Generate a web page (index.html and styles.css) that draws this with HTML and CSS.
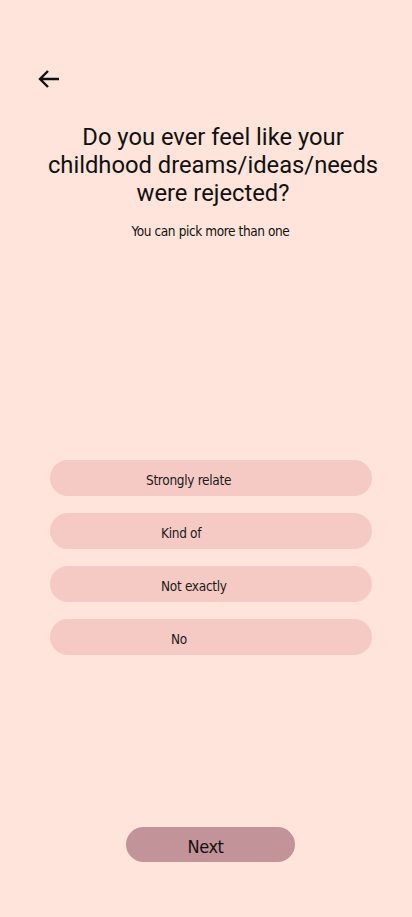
FILE: index.html
```html
<!DOCTYPE html>
<html>
<head>
<meta charset="utf-8">
<link rel="stylesheet" href="styles.css">
</head>
<body>
<div class="screen">
  <div class="topbar">
    <button class="back" aria-label="Back">
      <svg width="22" height="20" viewBox="0 0 22 20"><path d="M21 10H2.5M10 2L2 10l8 8" fill="none" stroke="#111" stroke-width="2.4" stroke-linejoin="miter"/></svg>
    </button>
  </div>
  <h1 class="title">Do you ever feel like your childhood dreams/ideas/needs were rejected?</h1>
  <p class="subtitle">You can pick more than one</p>
  <div class="options">
    <button class="option opt-1">Strongly relate</button>
    <button class="option opt-2">Kind of</button>
    <button class="option opt-3">Not exactly</button>
    <button class="option opt-4">No</button>
  </div>
  <div class="footer">
    <button class="next">Next</button>
  </div>
</div>
</body>
</html>
```
FILE: styles.css
```css
html, body {
  margin: 0;
  padding: 0;
  background: #fee4da;
}
.screen {
  width: 412px;
  height: 917px;
  display: flex;
  flex-direction: column;
  font-family: Roboto, "Noto Sans", sans-serif;
  color: #111;
}
.topbar {
  padding: 69px 0 0 38px;
  height: 20px;
}
.back {
  border: 0;
  background: none;
  padding: 0;
  width: 22px;
  height: 20px;
  display: block;
}
.title {
  margin: 34px auto 0;
  width: 344px;
  padding-left: 14px;
  font-size: 23.75px;
  font-weight: 400;
  line-height: 28px;
  text-align: center;
}
.subtitle {
  margin: 15px 0 0;
  padding-left: 9px;
  font-family: "DejaVu Sans Condensed", sans-serif;
  font-size: 13.5px;
  letter-spacing: -0.4px;
  line-height: 18px;
  text-align: center;
}
.options {
  margin: 220px 40px 0 50px;
  display: flex;
  flex-direction: column;
  gap: 17px;
}
.option {
  height: 36px;
  border: 0;
  border-radius: 18px;
  background: #f5cac4;
  font-family: "DejaVu Sans Condensed", sans-serif;
  font-size: 13.5px;
  letter-spacing: -0.3px;
  color: #1a1a1a;
  text-align: left;
  padding: 4px 0 0;
}
.opt-1 { padding-left: 96px; }
.opt-2 { padding-left: 111px; }
.opt-3 { padding-left: 111px; }
.opt-4 { padding-left: 121px; }
.footer {
  margin-top: auto;
  padding-bottom: 55px;
  display: flex;
  justify-content: center;
  padding-left: 9px;
}
.next {
  width: 169px;
  height: 35px;
  border: 0;
  border-radius: 18px;
  background: #c29399;
  font-family: "DejaVu Sans Condensed", sans-serif;
  font-size: 18px;
  letter-spacing: -0.4px;
  color: #111;
  padding: 3px 10px 0 0;
}
```
